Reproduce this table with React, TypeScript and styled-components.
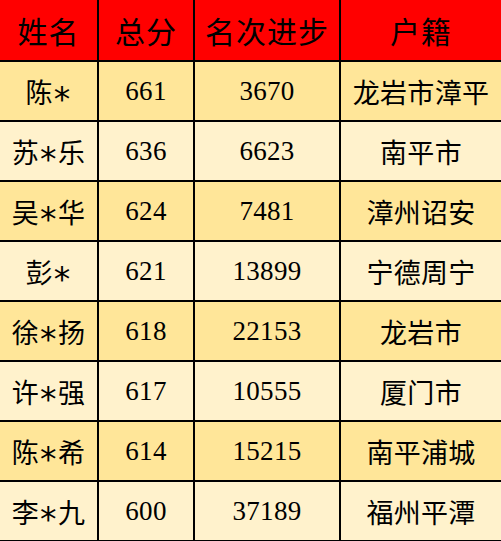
import React from "react";
import styled, { createGlobalStyle } from "styled-components";

const Global = createGlobalStyle`
  html, body { margin: 0; padding: 0; background: #ffffff; }
`;

const Table = styled.div`
  width: 501px;
  display: grid;
  grid-template-columns: 97px 94px 144px 160px;
  column-gap: 2px;
  row-gap: 2px;
  background: #000000;
  border-bottom: 1px solid #000000;
  grid-template-rows: 60px repeat(8, 58px);
`;

const HeadCell = styled.div`
  background: #ff0000;
  display: flex;
  align-items: center;
  justify-content: center;
  font-family: "Noto Sans CJK SC", sans-serif;
  font-size: 30px;
  color: #000000;
  letter-spacing: 1px;
`;

const Cell = styled.div<{ $alt: boolean }>`
  background: ${(p) => (p.$alt ? "#fff2cc" : "#ffe699")};
  display: flex;
  align-items: center;
  justify-content: center;
  font-family: "Liberation Serif", "Noto Sans CJK SC", serif;
  font-size: 27px;
  color: #000000;
  letter-spacing: 0.3px;
`;

const Star = styled.span`
  display: inline-block;
  font-family: "DejaVu Sans", sans-serif;
  font-size: 33px;
  line-height: 1;
  transform: translateY(8px);
  margin: 0 1px;
`;

const headers = ["姓名", "总分", "名次进步", "户籍"];
const rows: [string, string, string, string][] = [
  ["陈*", "661", "3670", "龙岩市漳平"],
  ["苏*乐", "636", "6623", "南平市"],
  ["吴*华", "624", "7481", "漳州诏安"],
  ["彭*", "621", "13899", "宁德周宁"],
  ["徐*扬", "618", "22153", "龙岩市"],
  ["许*强", "617", "10555", "厦门市"],
  ["陈*希", "614", "15215", "南平浦城"],
  ["李*九", "600", "37189", "福州平潭"],
];

function renderName(name: string) {
  const [a, b] = name.split("*");
  return (
    <>
      {a}
      <Star>*</Star>
      {b}
    </>
  );
}

export default function App() {
  return (
    <>
      <Global />
      <Table>
        {headers.map((h) => (
          <HeadCell key={h}>{h}</HeadCell>
        ))}
        {rows.map((r, i) =>
          r.map((c, j) => (
            <Cell key={`${i}-${j}`} $alt={i % 2 === 1}>
              {j === 0 ? renderName(c) : c}
            </Cell>
          ))
        )}
      </Table>
    </>
  );
}
